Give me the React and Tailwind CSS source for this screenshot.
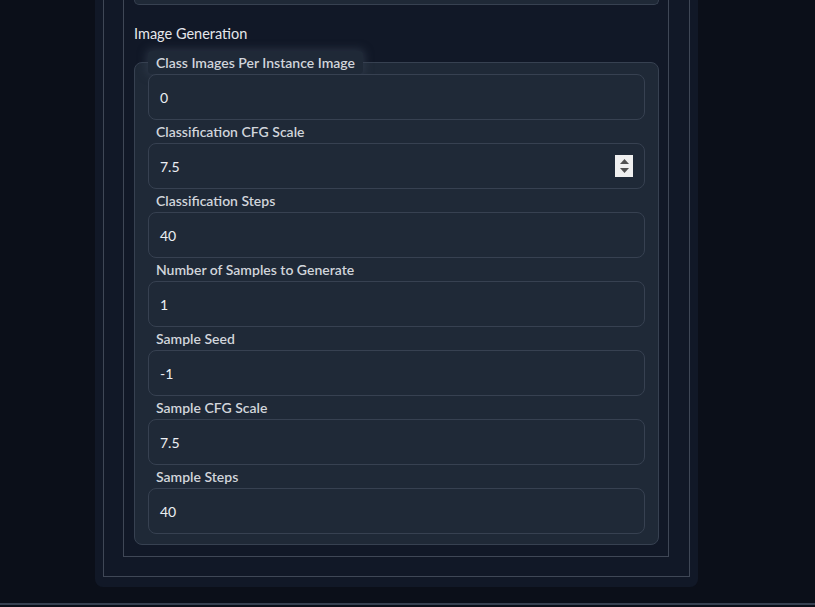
import React from 'react'

const fields = [
    { label: "Class Images Per Instance Image", value: "0", first: true },
    { label: "Classification CFG Scale", value: "7.5", spinner: true },
    { label: "Classification Steps", value: "40" },
    { label: "Number of Samples to Generate", value: "1" },
    { label: "Sample Seed", value: "-1" },
    { label: "Sample CFG Scale", value: "7.5" },
    { label: "Sample Steps", value: "40" },
];

const Spinner = () => (
    <div className="absolute right-[11px] top-[11px] w-[18px] h-[22px] bg-[#efefef] flex flex-col items-center justify-center gap-[4px]">
        <svg width="9" height="5" viewBox="0 0 9 5"><path d="M4.5 0 L9 5 L0 5 Z" fill="#505050" /></svg>
        <svg width="9" height="5" viewBox="0 0 9 5"><path d="M0 0 L9 0 L4.5 5 Z" fill="#505050" /></svg>
    </div>
);

const Field = ({ label, value, first, spinner }) => (
    <div>
        <div className={first
            ? "flex w-fit items-center h-[23px] -mt-[12px] px-2 bg-[#1f2937] rounded-sm shadow-[0_0_8px_2px_rgba(55,65,81,0.6)] text-[14px] font-semibold text-[#d1d5db]"
            : "flex items-center h-[23px] px-2 text-[14px] font-semibold text-[#d1d5db]"}>
            {label}
        </div>
        <div className="relative h-[46px] rounded-lg border border-[#374151] bg-[#1f2937] flex items-center pl-[11px] pr-3 text-[14px] text-[#eceff3]">
            {value}
            {spinner && <Spinner />}
        </div>
    </div>
);

const App = () => {
    return (
        <div className="relative h-[607px] w-full overflow-hidden bg-[#0b0f19]" style={{ fontFamily: "Lato, 'Noto Sans', sans-serif" }}>
            {/* Outer panel */}
            <div className="ml-[95px] w-[603px] bg-[#111827] rounded-b-lg px-2 pb-[10px]">
                <div className="border-x border-b border-[#3f4756] pl-[19px] pr-[20px] pb-[19px]">
                    <div className="border-x border-b border-[#3f4756] pl-[10px] pr-[9px] pb-[11px]">
                        {/* previous block, mostly scrolled away */}
                        <div className="h-[5px] bg-[#1f2937] border-x border-b border-[#374151] rounded-b-md" />
                        <div className="h-[57px] flex items-center text-[14.5px] text-[#e5e7eb]">
                            Image Generation
                        </div>
                        {/* Group */}
                        <div className="rounded-lg border border-[#374151] bg-[#1f2937] px-[13px] pb-[10px]">
                            {fields.map((f) => (
                                <Field key={f.label} {...f} />
                            ))}
                        </div>
                    </div>
                </div>
            </div>
            {/* bottom divider */}
            <div className="absolute left-0 right-0 top-[603px] h-[2px] bg-[#374151]" />
        </div>
    );
};

export default App;
